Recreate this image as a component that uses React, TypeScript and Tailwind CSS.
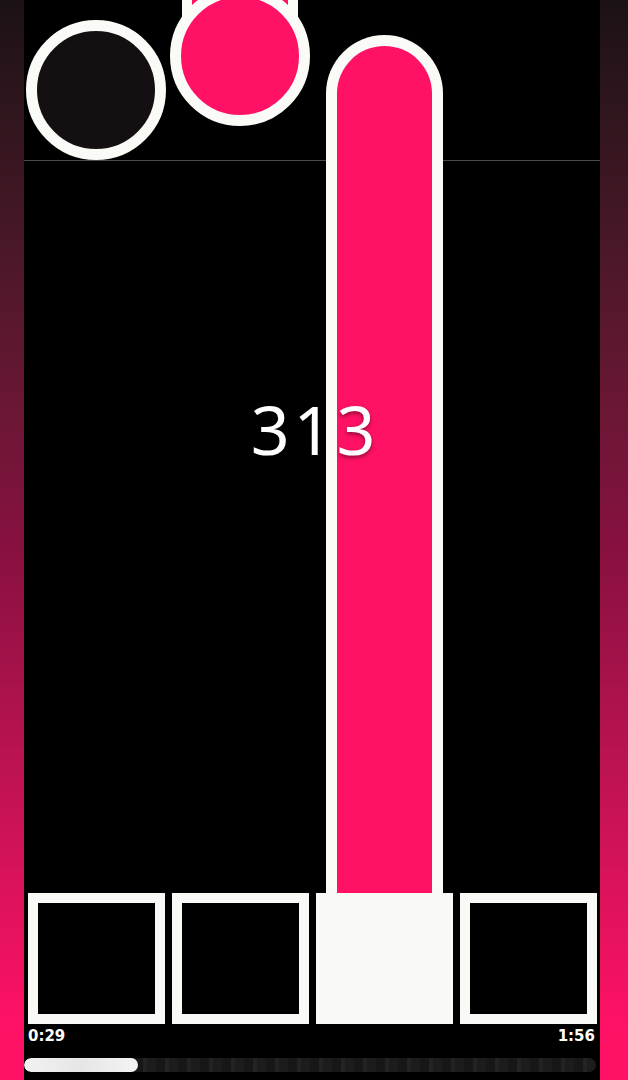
import React from "react";

const lanes = [0, 1, 2, 3];

function Key({ pressed }: { pressed: boolean }) {
  return (
    <div className="w-[144px] flex">
      <div
        className={
          "ml-[4px] w-[137px] h-[131px] border-[10px] border-[#f9f9f6] " +
          (pressed ? "bg-[#f9f9f6]" : "bg-black")
        }
      />
    </div>
  );
}

export default function App() {
  return (
    <div className="w-[628px] h-[1080px] flex bg-black overflow-hidden">
      {/* side glow */}
      <div className="w-[24px] h-full bg-linear-to-b from-[#1b1215] via-[#861040] via-50% to-[#ff1166] to-95%" />

      <div className="w-[576px] h-full flex flex-col bg-black">
        {/* playfield */}
        <div className="relative h-[893px]">
          <div className="absolute left-0 right-0 top-[160px] h-px bg-[#4b4b4b]" />

          {/* lane 1 tap note */}
          <div className="absolute left-[2px] top-[20px] w-[140px] h-[140px] rounded-full border-[11px] border-[#fafaf7] bg-[#141011]" />

          {/* lane 2 hold tail + head */}
          <div className="absolute left-[158px] top-0 w-[116px] h-[60px] border-x-[10px] border-[#fafaf7] bg-[#ff1265]" />
          <div className="absolute left-[146px] top-[-14px] w-[140px] h-[140px] rounded-full border-[11px] border-[#fafaf7] bg-[#ff1265]" />

          {/* lane 3 hold note */}
          <div className="absolute left-[302px] top-[35px] bottom-0 w-[117px] rounded-t-full border-x-[11px] border-t-[11px] border-[#fafaf7] bg-[#ff1265]" />

          {/* combo */}
          <div className="absolute left-0 right-0 top-[383px] flex justify-center">
            <span className="pl-[6px] font-['Noto_Sans',sans-serif] font-normal text-[68px] leading-[92px] text-white tracking-[4px] [text-shadow:0_2px_4px_rgba(0,0,0,0.45)]">
              313
            </span>
          </div>
        </div>

        {/* receptors */}
        <div className="flex">
          {lanes.map((i) => (
            <Key key={i} pressed={i === 2} />
          ))}
        </div>

        {/* time */}
        <div className="flex justify-between pl-[4px] pr-[5px] pt-[3px] font-['DejaVu_Sans',sans-serif] font-bold text-[15px] leading-[18px] text-white">
          <span>0:29</span>
          <span>1:56</span>
        </div>

        {/* progress */}
        <div className="mt-[13px] mr-[4px] h-[14px] rounded-full overflow-hidden flex bg-[repeating-linear-gradient(90deg,#171717_0px,#171717_9px,#232323_9px,#232323_13px,#1c1c1c_13px,#1c1c1c_22px)]">
          <div className="w-[114px] h-full rounded-full bg-linear-to-r from-[#f2f2f2] via-[#e6e6e6] to-[#f4f4f4]" />
        </div>
      </div>

      <div className="w-[28px] h-full bg-linear-to-b from-[#1b1215] via-[#861040] via-50% to-[#ff1166] to-95%" />
    </div>
  );
}
